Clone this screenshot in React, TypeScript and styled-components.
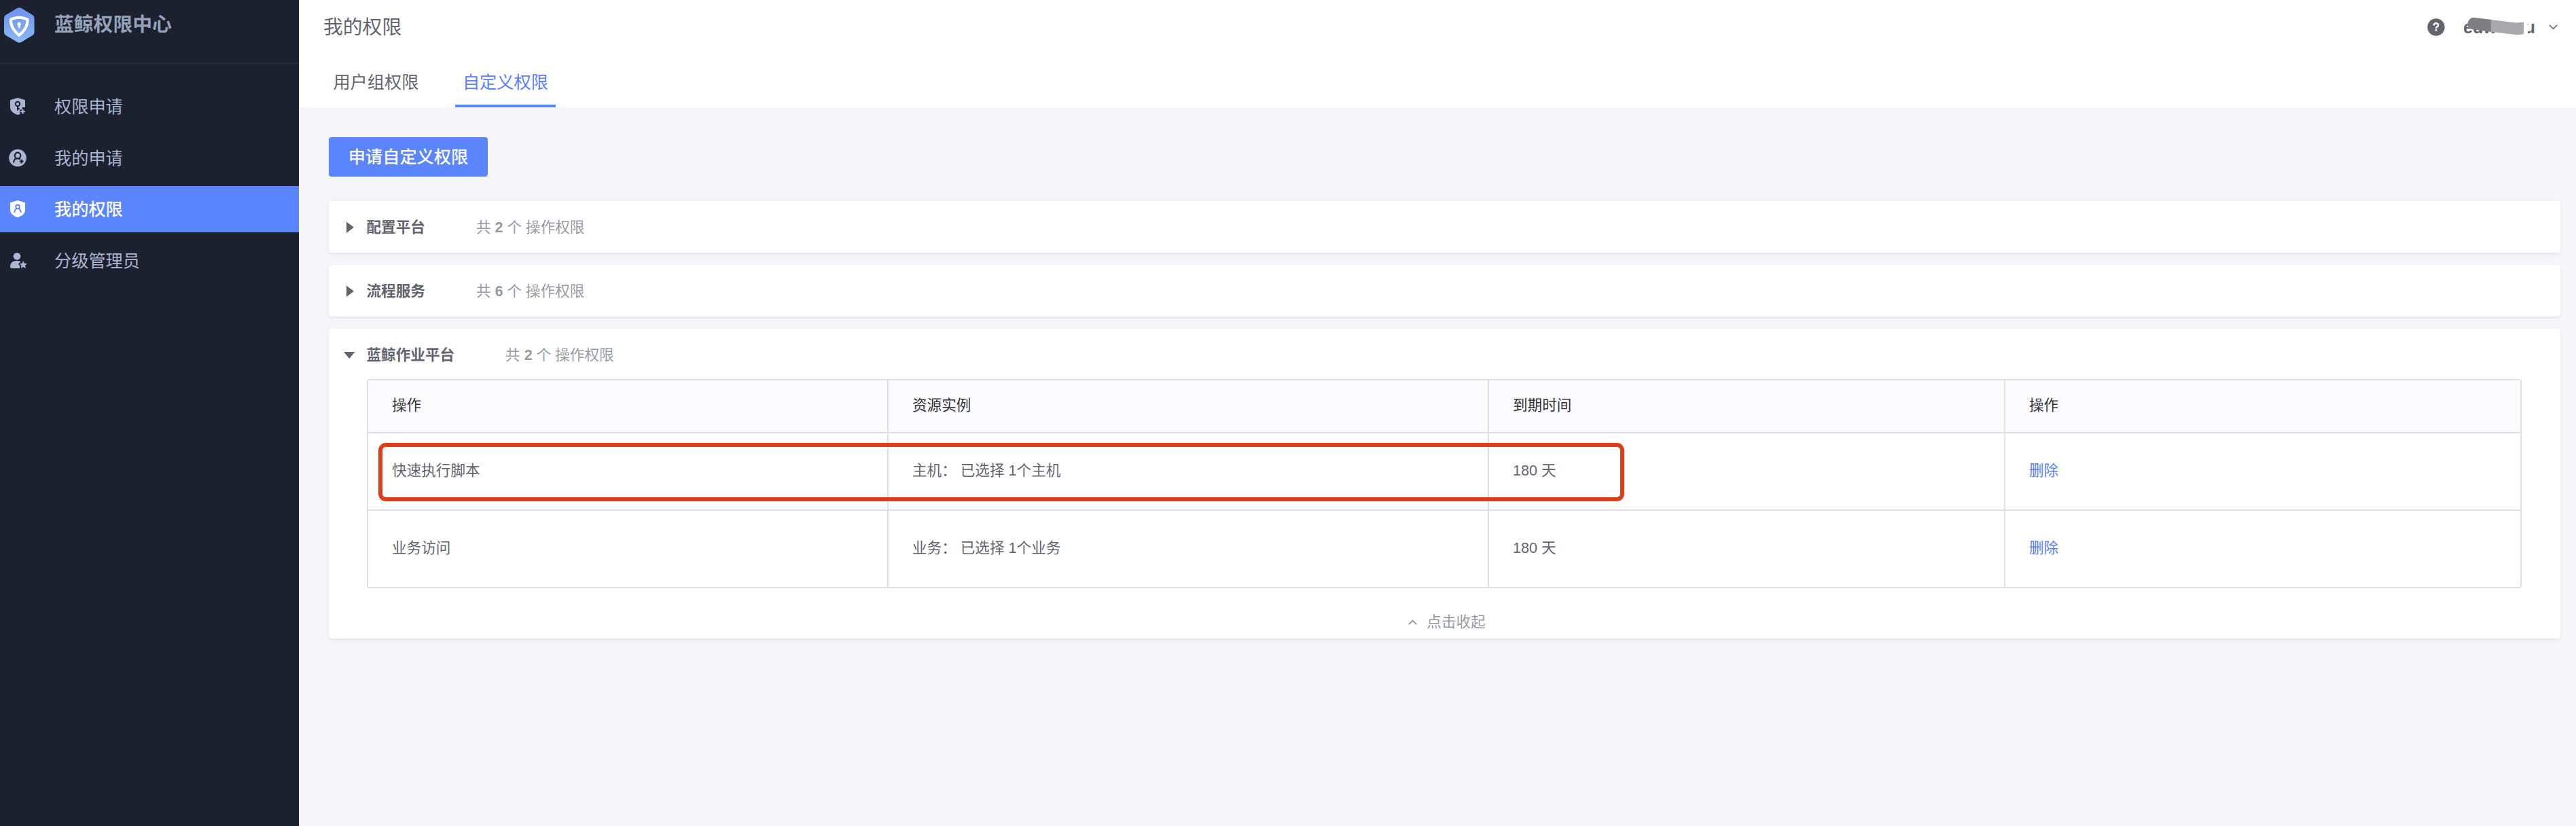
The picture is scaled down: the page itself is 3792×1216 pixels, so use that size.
import React from "react";
import styled, { createGlobalStyle, css } from "styled-components";

const GlobalStyle = createGlobalStyle`
  *, *::before, *::after { box-sizing: border-box; }
  body {
    margin: 0;
    background: #f5f5fa;
    color: #63656e;
    font-family: "Liberation Sans", "Noto Sans CJK SC", sans-serif;
    font-size: 21.6px;
    line-height: 32px;
  }
`;

const Shell = styled.div`
  display: flex;
  height: 1216px;
  overflow: hidden;
`;

/* ---------- sidebar ---------- */

const Sidebar = styled.aside`
  flex: 0 0 440px;
  background: #1c2130;
`;

const Brand = styled.div`
  display: flex;
  align-items: flex-start;
  height: 94px;
  padding: 11px 0 0 6px;
  border-bottom: 2px solid #262b3b;
`;

const BrandName = styled.span`
  margin: 5px 0 0 29px;
  font-size: 28.8px;
  line-height: 40px;
  font-weight: 700;
  color: #96a2b9;
`;

const Menu = styled.nav`
  display: flex;
  flex-direction: column;
  gap: 7.6px;
  padding-top: 29px;
`;

const MenuItem = styled.a<{ $active?: boolean }>`
  display: flex;
  align-items: center;
  height: 68px;
  padding-left: 12px;
  gap: 40px;
  font-size: 25.2px;
  color: #acb5d1;
  ${(p) =>
    p.$active &&
    css`
      background: #5a85fc;
      color: #fff;
      font-weight: 500;
    `}

  svg {
    flex: none;
  }
`;

const MenuLabel = styled.span`
  flex: 1;
`;

/* ---------- header ---------- */

const Main = styled.main`
  flex: 1;
  min-width: 0;
  display: flex;
  flex-direction: column;
`;

const Header = styled.header`
  display: flex;
  flex-direction: column;
  height: 158px;
  background: #fff;
`;

const TopBar = styled.div`
  display: flex;
  align-items: center;
  justify-content: space-between;
  height: 80px;
  padding: 0 27px 0 36px;
`;

const PageTitle = styled.h1`
  margin: 0;
  font-size: 28.8px;
  line-height: 40px;
  font-weight: 400;
`;

const Account = styled.div`
  display: flex;
  align-items: center;
`;

const UserName = styled.span`
  position: relative;
  display: flex;
  justify-content: space-between;
  width: 106px;
  margin: 0 20px 0 27px;
  font-size: 25.2px;
  font-weight: 700;
`;

const Redaction = styled.svg`
  position: absolute;
  left: 0;
  top: 0;
`;

const Tabs = styled.div`
  display: flex;
  gap: 42.8px;
  height: 78px;
  padding-left: 39.6px;
`;

const Tab = styled.button<{ $active?: boolean }>`
  height: 78px;
  padding: 8px 11px 0 10.8px;
  border: 0;
  border-bottom: 4px solid ${(p) => (p.$active ? "#5a85fc" : "transparent")};
  background: none;
  font: inherit;
  font-size: 25.2px;
  color: ${(p) => (p.$active ? "#5a80fc" : "#63656e")};
`;

/* ---------- content ---------- */

const Content = styled.section`
  display: flex;
  flex-direction: column;
  align-items: stretch;
  gap: 18px;
  padding: 44px 23px 0 44px;
`;

const PrimaryButton = styled.button`
  align-self: flex-start;
  width: 234px;
  height: 58px;
  margin-bottom: 18px;
  padding: 0;
  border: 0;
  border-radius: 4px;
  background: #5a85fc;
  color: #fff;
  font: inherit;
  font-size: 25.2px;
  font-weight: 500;
`;

const Card = styled.article`
  padding: 0 57px 0 56px;
  border-radius: 4px;
  background: #fff;
  box-shadow: 0 2px 4px rgba(0, 0, 0, 0.08);
`;

const CardHead = styled.div<{ $open?: boolean }>`
  display: flex;
  align-items: center;
  height: ${(p) => (p.$open ? "74px" : "76px")};
  padding-top: ${(p) => (p.$open ? "3px" : "1px")};
`;

const Caret = styled.svg`
  flex: none;
  width: 34px;
  height: 20px;
  margin-left: -34px;
`;

const SystemName = styled.strong`
  margin: 0 75px 0 -0.5px;
  font-weight: 700;
`;

const Count = styled.span`
  color: #979ba5;
`;

const Table = styled.div`
  position: relative;
  border: 2px solid #dfe0e5;
  border-radius: 4px;
`;

const Row = styled.div<{ $head?: boolean }>`
  display: grid;
  grid-template-columns: 766px 884px 760px 1fr;
  height: ${(p) => (p.$head ? "78px" : "114px")};
  border-bottom: 2px solid #dfe0e5;
  background: ${(p) => (p.$head ? "#fbfbfd" : "#fff")};
  color: ${(p) => (p.$head ? "#313238" : "#63656e")};

  &:first-of-type {
    border-radius: 2px 2px 0 0;
  }
  &:last-of-type {
    height: 112px;
    border-bottom: 0;
    border-radius: 0 0 2px 2px;
  }
`;

const Cell = styled.div`
  display: flex;
  align-items: center;
  padding: 0 35px 2px;
  white-space: pre;

  &:not(:last-child) {
    border-right: 2px solid #dfe0e5;
  }
`;

const DeleteLink = styled.a`
  color: #5a80fc;
`;

const Highlight = styled.span`
  position: absolute;
  left: 15px;
  top: 92px;
  width: 1834px;
  height: 86px;
  border: 6px solid #dc3e1a;
  border-radius: 11px;
`;

const Collapse = styled.div`
  display: flex;
  align-items: center;
  justify-content: center;
  gap: 14px;
  height: 74px;
  padding: 26px 0 0 8px;
  color: #979ba5;
`;

const LogoIcon = () => (
  <svg width="45" height="52" viewBox="0 0 45 52">
    <defs>
      <linearGradient id="logo" x1="0" y1="0" x2="0" y2="1">
        <stop offset="0" stopColor="#6d92ee" />
        <stop offset="1" stopColor="#8abaf3" />
      </linearGradient>
    </defs>
    <path
      fill="url(#logo)"
      d="M19 1.3q3.300-2 6.800 0L42 11q2.500 1.600 2.500 4.500v21q0 3-2.500 4.500L25.800 50.800q-3.500 2-6.800 0L2.500 41Q0 39.500 0 36.500v-21Q0 12.600 2.500 11z"
    />
    <path
      fill="none"
      stroke="#fff"
      strokeWidth="4"
      strokeLinejoin="round"
      d="M9.900 17.500Q22.200 11.800 34.500 17.500Q35.500 30 22.200 41Q8.900 30 9.900 17.500z"
    />
    <path fill="#fff" d="M22.200 21.700a2.800 2.800 0 0 1 1.700 5l-.6 3.500h-2.200l-.6-3.500a2.800 2.800 0 0 1 1.700-5z" />
  </svg>
);

const ApplyIcon = () => (
  <svg width="28" height="28" viewBox="0 0 28 28">
    <path fill="#acb5d1" d="M14 1l11 3.200V15h-4.500v3.500H17v5l1 1.400-4 1.100C7.500 24 3 20.500 3 15V4.200z" />
    <g fill="none" stroke="#1c2130" strokeWidth="2">
      <circle cx="14" cy="10" r="3.200" />
      <path d="M14 13v6.500M14 17h3" />
    </g>
    <path stroke="#acb5d1" strokeWidth="2" d="M21.500 17.800v7M18 21.300h7" />
  </svg>
);

const MyApplyIcon = () => (
  <svg width="28" height="28" viewBox="0 0 28 28">
    <circle cx="14" cy="13.500" r="12.800" fill="#acb5d1" />
    <g fill="none" stroke="#1c2130" strokeWidth="2.200">
      <circle cx="14" cy="10" r="4.300" />
      <path d="M8 20.500c0-4 2.500-6.300 6-6.300q2.300 0 3.800 1.300M19.700 15.800v5.800M16.800 18.700h5.800" />
    </g>
  </svg>
);

const MyPermIcon = () => (
  <svg width="28" height="28" viewBox="0 0 28 28">
    <path fill="#fff" d="M14 1l11 3.200V15c0 5.500-4.500 9-11 11C7.500 24 3 20.500 3 15V4.200z" />
    <g fill="none" stroke="#5a85fc" strokeWidth="1.800">
      <circle cx="14" cy="10.300" r="2.800" />
      <path d="M9.300 19c0-4 1.700-5.800 4.700-5.800s4.700 1.800 4.700 5.800" />
    </g>
  </svg>
);

const ManagerIcon = () => (
  <svg width="28" height="28" viewBox="0 0 28 28">
    <g fill="#acb5d1">
      <circle cx="13" cy="7.300" r="5.400" />
      <path d="M3 22.500c0-6 4-8.500 10-8.500 2.600 0 4.500.4 5.500 1.100l-1.700 1.900-1.600.8.300 1.800 2 1.700-.6 3.700H5q-2 0-2-2.500z" />
      <path d="M22.300 14l1.700 3.700 4 .4-3 2.700.9 4.200-3.600-2.100-3.600 2.100.9-4.200-3-2.700 4-.4z" />
    </g>
  </svg>
);

const HelpIcon = () => (
  <svg width="26" height="26" viewBox="0 0 26 26">
    <circle cx="13" cy="13" r="12.700" fill="#63656e" />
    <path
      fill="none"
      stroke="#fff"
      strokeWidth="2.400"
      d="M9.900 10.500c0-4.300 6.300-4 6.300-.6 0 2.400-3.200 2.300-3.200 5"
    />
    <circle cx="13" cy="17.400" r="1.400" fill="#fff" />
  </svg>
);

const Chevron = ({ up }: { up?: boolean }) => (
  <svg width="13" height="8" viewBox="0 0 13 8">
    <path
      fill="none"
      stroke={up ? "#979ba5" : "#737987"}
      strokeWidth="1.900"
      d={up ? "M.8 7.200L6.500 1.500l5.700 5.700" : "M.8.8l5.700 5.700L12.200.8"}
    />
  </svg>
);

const menu = [
  { label: "权限申请", icon: <ApplyIcon /> },
  { label: "我的申请", icon: <MyApplyIcon /> },
  { label: "我的权限", icon: <MyPermIcon />, active: true },
  { label: "分级管理员", icon: <ManagerIcon /> },
];

const rows = [
  { action: "快速执行脚本", kind: "主机", expires: "180 天" },
  { action: "业务访问", kind: "业务", expires: "180 天" },
];

interface SystemHeadProps {
  name: string;
  count: number;
  open?: boolean;
}

const SystemHead = ({ name, count, open }: SystemHeadProps) => (
  <CardHead $open={open}>
    <Caret viewBox="0 0 34 20">
      <path fill="#63656e" d={open ? "M0 5h16.500L8.200 15z" : "M4 1.500v16.500L15 9.700z"} />
    </Caret>
    <SystemName>{name}</SystemName>
    <Count>
      共 <b>{count}</b> 个 操作权限
    </Count>
  </CardHead>
);

export default function App() {
  return (
    <Shell>
      <GlobalStyle />
      <Sidebar>
        <Brand>
          <LogoIcon />
          <BrandName>蓝鲸权限中心</BrandName>
        </Brand>
        <Menu>
          {menu.map((item) => (
            <MenuItem key={item.label} $active={item.active}>
              {item.icon}
              <MenuLabel>{item.label}</MenuLabel>
            </MenuItem>
          ))}
        </Menu>
      </Sidebar>
      <Main>
        <Header>
          <TopBar>
            <PageTitle>我的权限</PageTitle>
            <Account>
              <HelpIcon />
              <UserName>
                <span>edw</span>
                <span>u</span>
                <Redaction width="107" height="32" viewBox="0 0 107 32">
                  <path fill="#fff" d="M88 6h7v20h-7zM94 12.500h6v8l-5 2z" />
                  <path fill="#7f7e82" d="M41.500 23L15 19.500Q6 18 6 12 8 2 15 1.800L41.500 5z" />
                  <path fill="#a9a8ad" d="M41 5l37 4.500 11-1V26q-6 1.800-14 .8L41 22.800z" />
                </Redaction>
              </UserName>
              <Chevron />
            </Account>
          </TopBar>
          <Tabs>
            <Tab>用户组权限</Tab>
            <Tab $active>自定义权限</Tab>
          </Tabs>
        </Header>
        <Content>
          <PrimaryButton>申请自定义权限</PrimaryButton>
          <Card>
            <SystemHead name="配置平台" count={2} />
          </Card>
          <Card>
            <SystemHead name="流程服务" count={6} />
          </Card>
          <Card>
            <SystemHead name="蓝鲸作业平台" count={2} open />
            <Table>
              <Row $head>
                <Cell>操作</Cell>
                <Cell>资源实例</Cell>
                <Cell>到期时间</Cell>
                <Cell>操作</Cell>
              </Row>
              {rows.map((row) => (
                <Row key={row.action}>
                  <Cell>{row.action}</Cell>
                  <Cell>{`${row.kind}： 已选择 1个${row.kind}`}</Cell>
                  <Cell>{row.expires}</Cell>
                  <Cell>
                    <DeleteLink>删除</DeleteLink>
                  </Cell>
                </Row>
              ))}
              <Highlight />
            </Table>
            <Collapse>
              <Chevron up />
              <span>点击收起</span>
            </Collapse>
          </Card>
        </Content>
      </Main>
    </Shell>
  );
}
